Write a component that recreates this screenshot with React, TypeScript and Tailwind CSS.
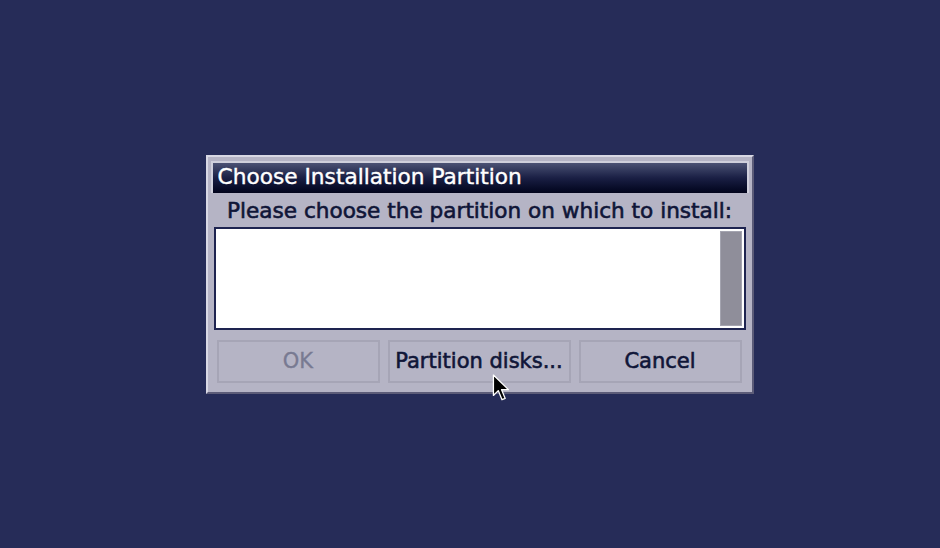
export default function App() {
  return (
    <main className="flex min-h-[548px] w-full items-start justify-center bg-[#262c58] pt-[155px] font-['DejaVu_Sans',sans-serif]">
      <div className="relative ml-[19px] w-[548px] border-2 border-t-[#d8d8e4] border-l-[#d8d8e4] border-r-[#5c5c78] border-b-[#5c5c78] bg-[#b5b4c5] px-[3px] pt-[4px] pb-[9px]">
        <div className="h-[32px] border-2 border-[#d0d0dc] border-b-0 bg-gradient-to-b from-[#4c5274] via-[#1a1f44] to-[#03051c] pl-[5px] text-[21.7px] leading-[28px] text-white [-webkit-text-stroke:0.4px_#fff]">
          Choose Installation Partition
        </div>
        <p className="mt-[3px] text-center text-[21.6px] leading-[30px] text-[#101638] [-webkit-text-stroke:0.6px_#101638]">
          Please choose the partition on which to install:
        </p>
        <div className="mx-[3px] mt-[1px] flex h-[103px] border-2 border-[#1e2450] bg-white">
          <div className="flex-1" />
          <div className="m-[2px] w-[22px] border border-[#a4a4b0] bg-[#8f8e9a]" />
        </div>
        <div className="mt-[10px] flex gap-[8px] px-[6px]">
          <button className="h-[43px] w-[163px] border-2 border-[#a6a5b6] text-[21px] text-[#787a92] [-webkit-text-stroke:0.3px_#787a92]">
            OK
          </button>
          <button className="h-[43px] w-[183px] border-2 border-[#a6a5b6] text-[21px] text-[#101638] [-webkit-text-stroke:0.6px_#101638]">
            Partition disks...
          </button>
          <button className="h-[43px] w-[163px] border-2 border-[#a6a5b6] text-[21px] text-[#101638] [-webkit-text-stroke:0.6px_#101638]">
            Cancel
          </button>
        </div>
        <svg
          className="absolute left-[284px] top-[217px]"
          width="20"
          height="30"
          viewBox="0 0 18 28"
        >
          <path
            d="M1 1 L1 20 L5.5 15.5 L9 24 L12 22.8 L8.6 14.6 L15 14.6 Z"
            fill="#000"
            stroke="#fff"
            strokeWidth="1.2"
            strokeLinejoin="round"
          />
        </svg>
      </div>
    </main>
  );
}
